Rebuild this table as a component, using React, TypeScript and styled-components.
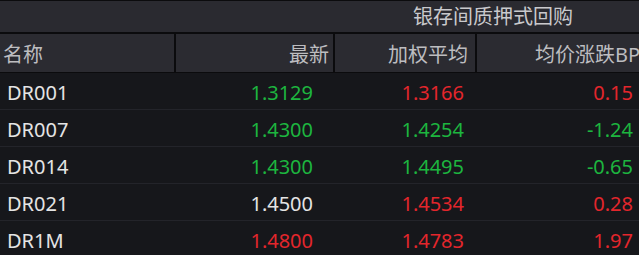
import { createGlobalStyle } from "styled-components";
import styled from "styled-components";

type Tone = "up" | "down" | "flat";

interface Row {
  name: string;
  last: string;
  lastTone: Tone;
  avg: string;
  avgTone: Tone;
  change: string;
  changeTone: Tone;
}

const rows: Row[] = [
  { name: "DR001", last: "1.3129", lastTone: "down", avg: "1.3166", avgTone: "up", change: "0.15", changeTone: "up" },
  { name: "DR007", last: "1.4300", lastTone: "down", avg: "1.4254", avgTone: "down", change: "-1.24", changeTone: "down" },
  { name: "DR014", last: "1.4300", lastTone: "down", avg: "1.4495", avgTone: "down", change: "-0.65", changeTone: "down" },
  { name: "DR021", last: "1.4500", lastTone: "flat", avg: "1.4534", avgTone: "up", change: "0.28", changeTone: "up" },
  { name: "DR1M", last: "1.4800", lastTone: "up", avg: "1.4783", avgTone: "up", change: "1.97", changeTone: "up" },
];

const toneColor: Record<Tone, string> = {
  up: "#e3262c",
  down: "#1db53f",
  flat: "#e4e4e4",
};

const GlobalStyle = createGlobalStyle`
  html, body {
    margin: 0;
    padding: 0;
    background: #16171b;
  }
  body {
    font-family: "Noto Sans", "Noto Sans CJK SC", sans-serif;
  }
`;

const Board = styled.div`
  width: 639px;
  height: 255px;
  overflow: hidden;
  background: #0b0b0d;
  padding-top: 1px;
  box-sizing: border-box;
`;

const TitleBar = styled.div`
  height: 31px;
  background: #2a2a30;
  display: flex;
  align-items: center;
  justify-content: flex-end;
  padding-right: 66px;
  color: #c9c9cc;
  font-size: 20px;
  line-height: 1;
`;

const Grid = styled.div`
  display: grid;
  grid-template-columns: 174px 157px 140px 172px;
  column-gap: 2px;
`;

const HeadRow = styled(Grid)`
  margin-top: 2px;
  height: 38px;
  border-bottom: 1px solid #0b0b0d;
`;

const HeadCell = styled.div<{ $align: "left" | "right"; $pad: number }>`
  background: #2b2b31;
  color: #bdbdc0;
  font-size: 20px;
  display: flex;
  align-items: center;
  justify-content: ${(p) => (p.$align === "left" ? "flex-start" : "flex-end")};
  padding: ${(p) => (p.$align === "left" ? `0 0 0 ${p.$pad}px` : `0 ${p.$pad}px 0 0`)};
  white-space: nowrap;
`;

const Body = styled.div`
  background: #16171b;
`;

const DataRow = styled(Grid)`
  height: 36px;
  border-bottom: 1px solid #23242a;
`;

const Cell = styled.div<{ $tone?: Tone; $pad: number; $align?: "left" | "right" }>`
  display: flex;
  align-items: center;
  justify-content: ${(p) => (p.$align === "left" ? "flex-start" : "flex-end")};
  padding: ${(p) => (p.$align === "left" ? `2px 0 0 ${p.$pad}px` : `2px ${p.$pad}px 0 0`)};
  font-size: 20px;
  color: ${(p) => (p.$tone ? toneColor[p.$tone] : "#e4e4e4")};
  white-space: nowrap;
`;

export default function App() {
  return (
    <>
      <GlobalStyle />
      <Board>
        <TitleBar>银存间质押式回购</TitleBar>
        <HeadRow>
          <HeadCell $align="left" $pad={3}>名称</HeadCell>
          <HeadCell $align="right" $pad={4}>最新</HeadCell>
          <HeadCell $align="right" $pad={7}>加权平均</HeadCell>
          <HeadCell $align="right" $pad={9}>均价涨跌BP</HeadCell>
        </HeadRow>
        <Body>
          {rows.map((r) => (
            <DataRow key={r.name}>
              <Cell $align="left" $pad={7}>{r.name}</Cell>
              <Cell $tone={r.lastTone} $pad={20}>{r.last}</Cell>
              <Cell $tone={r.avgTone} $pad={11}>{r.avg}</Cell>
              <Cell $tone={r.changeTone} $pad={16}>{r.change}</Cell>
            </DataRow>
          ))}
        </Body>
      </Board>
    </>
  );
}
